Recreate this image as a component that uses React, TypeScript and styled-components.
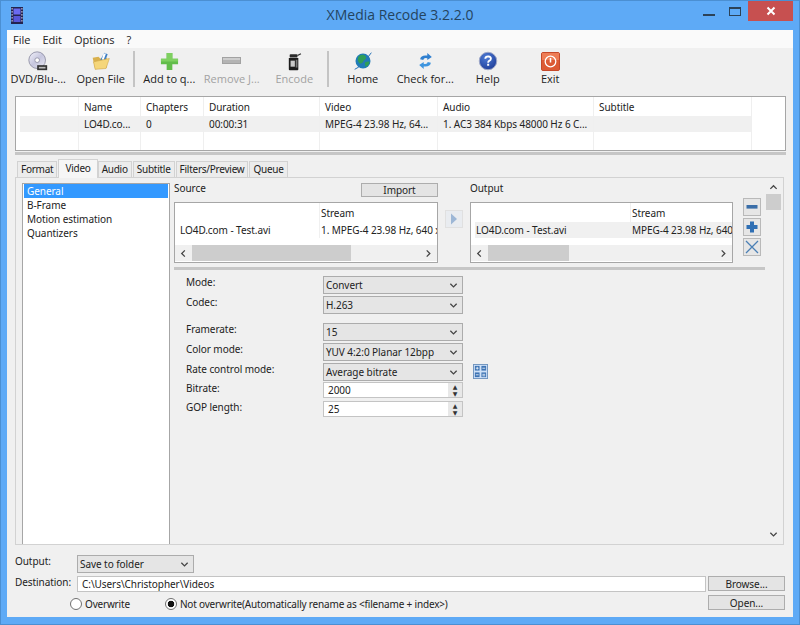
import React from 'react';
import styled, {createGlobalStyle} from 'styled-components';

const GlobalStyle = createGlobalStyle`
  html, body {
    margin: 0;
    padding: 0;
    background: #5eaaf6;
  }
  * {
    box-sizing: border-box;
  }
`;

const BODY_FONT = `"Noto Sans", "Open Sans", "Liberation Sans", sans-serif`;
const UI_FONT = `"Open Sans", "Noto Sans", "Liberation Sans", sans-serif`;

const QUEUE_COLUMNS = [63, 62, 63, 116, 118, 156, 158, 33];
const QUEUE_HEAD = ['', 'Name', 'Chapters', 'Duration', 'Video', 'Audio', 'Subtitle', ''];
const QUEUE_ROW = ['', 'LO4D.co...', '0', '00:00:31', 'MPEG-4 23.98 Hz, 64...', '1. AC3 384 Kbps 48000 Hz 6 C...', '', ''];

function Chevron({dir = 'down', size = 9}: {dir?: 'down' | 'up' | 'left' | 'right'; size?: number}) {
  const points = {
    down: '1.5,3 5,6.5 8.5,3',
    up: '1.5,6.5 5,3 8.5,6.5',
    left: '6.5,1.5 3,5 6.5,8.5',
    right: '3,1.5 6.5,5 3,8.5',
  }[dir];
  return (
    <svg width={size} height={size} viewBox="0 0 10 10">
      <polyline points={points} fill="none" stroke="#444" strokeWidth="1.4"/>
    </svg>
  );
}

function AppIcon() {
  return (
    <svg width="12" height="17" viewBox="0 0 12 17">
      <rect width="12" height="17" fill="#23234f"/>
      <rect x="2.5" y="1.5" width="7" height="6" fill="#6a6af0"/>
      <rect x="2.5" y="9" width="7" height="6" fill="#5656d8"/>
      {[1, 4, 7, 10, 13].map(y => (
        <g key={y}>
          <rect x="0.5" y={y} width="1.2" height="1.6" fill="#b9b9d8"/>
          <rect x="10.3" y={y} width="1.2" height="1.6" fill="#b9b9d8"/>
        </g>
      ))}
    </svg>
  );
}

function DiscIcon() {
  return (
    <svg width="20" height="20" viewBox="0 0 24 24">
      <defs>
        <linearGradient id="disc" x1="0" y1="0" x2="1" y2="1">
          <stop offset="0" stopColor="#f4f4fb"/>
          <stop offset="0.5" stopColor="#c6c6de"/>
          <stop offset="1" stopColor="#e8e8f2"/>
        </linearGradient>
      </defs>
      <circle cx="11" cy="11" r="10" fill="url(#disc)" stroke="#8c8ca0"/>
      <circle cx="11" cy="11" r="2.8" fill="#fff" stroke="#8c8ca0"/>
      <rect x="11" y="17" width="12" height="6" fill="#333"/>
      <rect x="13" y="19" width="8" height="2" fill="#bbb"/>
    </svg>
  );
}

function FolderIcon() {
  return (
    <svg width="20" height="20" viewBox="0 0 24 24">
      <path d="M2 8 L9 7 L11 9 L19 8 L19 20 L5 22 Z" fill="#d9b14e"/>
      <path d="M11 11 L16 2 L20 4 L17 12 Z" fill="#3f7fc4"/>
      <path d="M13 10 L15 3 L18 3 L15 11 Z" fill="#fff"/>
      <path d="M3 13 L22 9 L18 21 L5 22 Z" fill="#f5d67a" stroke="#cfa548" strokeWidth="0.7"/>
    </svg>
  );
}

function PlusIcon() {
  return (
    <svg width="19" height="19" viewBox="0 0 20 20">
      <path d="M7 1 H13 V7 H19 V13 H13 V19 H7 V13 H1 V7 H7 Z" fill="#62bd4a"/>
      <path d="M7 1 H13 V7 H7 Z M1 7 H19 V10 H1 Z" fill="#7ed060"/>
    </svg>
  );
}

function MinusIcon() {
  return (
    <svg width="20" height="8" viewBox="0 0 20 8">
      <rect x="0.5" y="0.5" width="18" height="6" fill="#b4b4b4" stroke="#a2a2a2"/>
      <rect x="1" y="1" width="17" height="2" fill="#cdcdcd"/>
    </svg>
  );
}

function EncodeIcon() {
  return (
    <svg width="16" height="19" viewBox="0 0 18 22">
      <path d="M3 7 L3 20 Q3 21 4 21 L13 21 Q14 21 14 20 L14 7 Z" fill="#1c1c1c"/>
      <rect x="4" y="2.5" width="9" height="4" rx="1" fill="#2a2a2a"/>
      <path d="M13 4 L17 2" stroke="#2a2a2a" strokeWidth="1.4"/>
      <rect x="5" y="10" width="5" height="7" fill="#c9c9c9"/>
      <rect x="11" y="9" width="2" height="9" fill="#777"/>
    </svg>
  );
}

function GlobeIcon() {
  return (
    <svg width="20" height="20" viewBox="0 0 24 24">
      <circle cx="12" cy="12" r="9" fill="#1f7cb8"/>
      <path d="M7 6 Q12 3 15 6 Q17 10 13 11 Q12 15 8 15 Q4 11 7 6 Z" fill="#2f9e58"/>
      <path d="M14 14 Q18 12 20 13 Q19 18 15 19 Z" fill="#2f9e58"/>
      <path d="M2 22 Q10 19 22 2" fill="none" stroke="#2b74b8" strokeWidth="1.2"/>
    </svg>
  );
}

function RefreshIcon() {
  return (
    <svg width="15" height="18" viewBox="0 0 16 20">
      <path d="M2 8 Q3 3 10 4 L10 1 L15 5.5 L10 9 L10 7 Q6 6 5.5 9 Z" fill="#2f7fd0"/>
      <path d="M14 12 Q13 17 6 16 L6 19 L1 14.5 L6 11 L6 13 Q10 14 10.5 11 Z" fill="#3f95de"/>
    </svg>
  );
}

function HelpIcon() {
  return (
    <svg width="20" height="20" viewBox="0 0 24 24">
      <defs>
        <radialGradient id="help" cx="0.4" cy="0.3" r="0.8">
          <stop offset="0" stopColor="#4d7bd6"/>
          <stop offset="1" stopColor="#1c3a94"/>
        </radialGradient>
      </defs>
      <circle cx="12" cy="12" r="10.5" fill="url(#help)" stroke="#9fa8c8" strokeWidth="1.2"/>
      <path d="M8.7 9.3 Q9 6.4 12.2 6.4 Q15.6 6.6 15.5 9.3 Q15.4 11 13.4 11.9 Q12.2 12.5 12.2 14" fill="none" stroke="#fff" strokeWidth="2.2"/>
      <rect x="11" y="15.3" width="2.4" height="2.4" fill="#fff"/>
    </svg>
  );
}

function ExitIcon() {
  return (
    <svg width="19" height="19" viewBox="0 0 19 19">
      <rect x="0.5" y="0.5" width="18" height="18" rx="1.5" fill="#dc5a34" stroke="#c5492a"/>
      <rect x="1" y="1" width="17" height="7" fill="#ee7d55"/>
      <circle cx="9.5" cy="9.5" r="5.3" fill="none" stroke="#fff" strokeWidth="1.3"/>
      <path d="M9.5 6 V10.5" stroke="#fff" strokeWidth="1.5"/>
    </svg>
  );
}

function CalcIcon() {
  return (
    <svg width="15" height="15" viewBox="0 0 16 16">
      <rect x="0.5" y="0.5" width="15" height="15" fill="#cfe1f7" stroke="#6f93bd"/>
      <rect x="2" y="2" width="5" height="5" fill="#3e74b4"/>
      <rect x="9" y="2" width="5" height="5" fill="#3e74b4"/>
      <rect x="2" y="9" width="5" height="5" fill="#3e74b4"/>
      <rect x="9" y="9" width="5" height="5" fill="#3e74b4"/>
      <path d="M3 4.5 H6 M4.5 3 V6 M10 4.5 H13 M3 11.5 H6 M10 11 H13 M10 12.6 H13" stroke="#fff" strokeWidth="0.8"/>
    </svg>
  );
}

function SideGlyph({kind}: {kind: 'minus' | 'plus' | 'cross'}) {
  return (
    <svg width="14" height="14" viewBox="0 0 14 14">
      {kind === 'minus' && <rect x="1.5" y="5" width="11" height="3.6" fill="#3a6ea8"/>}
      {kind === 'plus' && <path d="M5 1.5 H9 V5 H12.5 V9 H9 V12.5 H5 V9 H1.5 V5 H5 Z" fill="#2f6fb4"/>}
      {kind === 'cross' && <path d="M1 1 L13 13 M13 1 L1 13" stroke="#4a7fb5" strokeWidth="1.3"/>}
    </svg>
  );
}

function MiniList({nameWidth, name, stream, shaded, thumbWidth}: {
  nameWidth: number;
  name: string;
  stream: string;
  shaded?: boolean;
  thumbWidth: number;
}) {
  return (
    <MiniTable>
      <MiniRow $height={19}>
        <MiniCell $width={nameWidth}/>
        <MiniCell>Stream</MiniCell>
      </MiniRow>
      <MiniRow $height={16} $shaded={shaded}>
        <MiniCell $width={nameWidth}>{name}</MiniCell>
        <MiniCell>{stream}</MiniCell>
      </MiniRow>
      <MiniRow $height={7}/>
      <HScroll>
        <ScrollArrow><Chevron dir="left"/></ScrollArrow>
        <ScrollThumb style={{width: thumbWidth}}/>
        <ScrollGap/>
        <ScrollArrow><Chevron dir="right"/></ScrollArrow>
      </HScroll>
    </MiniTable>
  );
}

export default function App() {
  return (
    <Win>
      <GlobalStyle/>
      <TitleBar>
        <TitleIcon><AppIcon/></TitleIcon>
        <TitleText>XMedia Recode 3.2.2.0</TitleText>
        <WinControls>
          <MinGlyph/>
          <MaxGlyph/>
          <CloseButton>
            <svg width="10" height="10" viewBox="0 0 10 10">
              <path d="M1.5 1.5 L8.5 8.5 M8.5 1.5 L1.5 8.5" stroke="#fff" strokeWidth="2"/>
            </svg>
          </CloseButton>
        </WinControls>
      </TitleBar>
      <Client>
        <MenuBar>
          <MenuItem>File</MenuItem>
          <MenuItem>Edit</MenuItem>
          <MenuItem>Options</MenuItem>
          <MenuItem>?</MenuItem>
        </MenuBar>
        <Toolbar>
          <ToolButton><ToolIcon><DiscIcon/></ToolIcon>DVD/Blu-...</ToolButton>
          <ToolButton><ToolIcon><FolderIcon/></ToolIcon>Open File</ToolButton>
          <ToolSep/>
          <ToolButton><ToolIcon><PlusIcon/></ToolIcon>Add to q...</ToolButton>
          <ToolButton $disabled><ToolIcon><MinusIcon/></ToolIcon>Remove J...</ToolButton>
          <ToolButton $disabled><ToolIcon><EncodeIcon/></ToolIcon>Encode</ToolButton>
          <ToolSep/>
          <ToolButton><ToolIcon><GlobeIcon/></ToolIcon>Home</ToolButton>
          <ToolButton><ToolIcon><RefreshIcon/></ToolIcon>Check for...</ToolButton>
          <ToolButton><ToolIcon><HelpIcon/></ToolIcon>Help</ToolButton>
          <ToolButton><ToolIcon><ExitIcon/></ToolIcon>Exit</ToolButton>
        </Toolbar>

        <QueueTable>
          <QueueRow $height={19} $line={21}>
            {QUEUE_HEAD.map((text, i) => (
              <QueueCell key={i} style={{width: QUEUE_COLUMNS[i]}} $last={i === 7}>{text}</QueueCell>
            ))}
          </QueueRow>
          <QueueRow $height={16} $line={17}>
            {QUEUE_ROW.map((text, i) => (
              <QueueCell key={i} style={{width: QUEUE_COLUMNS[i]}} $shaded={i < 7} $first={i === 0} $last={i === 7}>
                {text}
              </QueueCell>
            ))}
          </QueueRow>
          <QueueRow $height={18} $line={17}>
            {QUEUE_COLUMNS.map((width, i) => (
              <QueueCell key={i} style={{width}} $last={i === 7}/>
            ))}
          </QueueRow>
        </QueueTable>
        <WideSplitter/>

        <Tabs>
          <Tab>Format</Tab>
          <Tab $active>Video</Tab>
          <Tab>Audio</Tab>
          <Tab>Subtitle</Tab>
          <Tab>Filters/Preview</Tab>
          <Tab>Queue</Tab>
        </Tabs>
        <Pane>
          <SideList>
            <SideItem $selected>General</SideItem>
            <SideItem>B-Frame</SideItem>
            <SideItem>Motion estimation</SideItem>
            <SideItem>Quantizers</SideItem>
          </SideList>
          <Content>
            <Streams>
              <StreamColumn $width={264}>
                <StreamHead>
                  <span>Source</span>
                  <ImportButton>Import</ImportButton>
                </StreamHead>
                <MiniList nameWidth={146} name="LO4D.com - Test.avi" stream="1. MPEG-4 23.98 Hz, 640 x 360" thumbWidth={159}/>
              </StreamColumn>
              <ArrowButton>
                <svg width="8" height="12" viewBox="0 0 8 12">
                  <path d="M1 0.5 L7 6 L1 11.5 Z" fill="#9db7d6"/>
                </svg>
              </ArrowButton>
              <StreamColumn $width={263}>
                <StreamHead><span>Output</span></StreamHead>
                <MiniList nameWidth={161} name="LO4D.com - Test.avi" stream="MPEG-4 23.98 Hz, 640 x 360" shaded thumbWidth={81}/>
              </StreamColumn>
              <SideButtons>
                <SideButton><SideGlyph kind="minus"/></SideButton>
                <SideButton><SideGlyph kind="plus"/></SideButton>
                <SideButton><SideGlyph kind="cross"/></SideButton>
              </SideButtons>
            </Streams>
            <InnerSplitter/>
            <Form>
              <FormRow>
                <FieldLabel>Mode:</FieldLabel>
                <Combo $width={140}>Convert<Chevron/></Combo>
              </FormRow>
              <FormRow $top={2}>
                <FieldLabel>Codec:</FieldLabel>
                <Combo $width={140}>H.263<Chevron/></Combo>
              </FormRow>
              <FormRow $top={9}>
                <FieldLabel>Framerate:</FieldLabel>
                <Combo $width={140}>15<Chevron/></Combo>
              </FormRow>
              <FormRow $top={2}>
                <FieldLabel>Color mode:</FieldLabel>
                <Combo $width={140}>YUV 4:2:0 Planar 12bpp<Chevron/></Combo>
              </FormRow>
              <FormRow $top={2}>
                <FieldLabel>Rate control mode:</FieldLabel>
                <Combo $width={140}>Average bitrate<Chevron/></Combo>
                <CalcSlot><CalcIcon/></CalcSlot>
              </FormRow>
              <FormRow $top={1}>
                <FieldLabel>Bitrate:</FieldLabel>
                <Spin>2000<SpinArrows>▲<br/>▼</SpinArrows></Spin>
              </FormRow>
              <FormRow $top={3}>
                <FieldLabel>GOP length:</FieldLabel>
                <Spin>25<SpinArrows>▲<br/>▼</SpinArrows></Spin>
              </FormRow>
            </Form>
          </Content>
          <VScroll>
            <Chevron dir="up"/>
            <VThumb/>
            <VGap/>
            <Chevron dir="down"/>
          </VScroll>
        </Pane>

        <Bottom>
          <BottomRow $height={20} $top={10}>
            <BottomLabel>Output:</BottomLabel>
            <Combo $width={117}>Save to folder<Chevron/></Combo>
          </BottomRow>
          <BottomRow $height={16} $top={1}>
            <BottomLabel>Destination:</BottomLabel>
            <PathField>C:\Users\Christopher\Videos</PathField>
            <PushButton>Browse...</PushButton>
          </BottomRow>
          <BottomRow $height={15} $top={3}>
            <RadioGroup>
              <RadioOption><Radio/>Overwrite</RadioOption>
              <RadioOption><Radio $checked/>Not overwrite(Automatically rename as &lt;filename + index&gt;)</RadioOption>
            </RadioGroup>
            <PushButton>Open...</PushButton>
          </BottomRow>
        </Bottom>
      </Client>
    </Win>
  );
}

const Win = styled.div`
  width: 800px;
  height: 625px;
  padding-bottom: 7px;
  display: flex;
  flex-direction: column;
  background: #5eaaf6;
  border: 1px solid #4b8fd2;
  overflow: hidden;
  color: #222;
  font-family: ${BODY_FONT};
  font-size: 10px;
  letter-spacing: -0.06px;
`;

const TitleBar = styled.div`
  height: 29px;
  flex: none;
  display: grid;
  grid-template-columns: 1fr auto 1fr;
  padding: 0 6px;
`;

const TitleIcon = styled.div`
  padding: 6px 0 0 4px;
`;

const TitleText = styled.div`
  font-family: ${UI_FONT};
  font-size: 14px;
  line-height: 28px;
  letter-spacing: 0;
  color: #24445f;
`;

const WinControls = styled.div`
  justify-self: end;
  display: flex;
  align-items: flex-start;
`;

const MinGlyph = styled.span`
  width: 12px;
  height: 2px;
  margin-top: 13px;
  background: #2c4257;
`;

const MaxGlyph = styled.span`
  width: 12px;
  height: 9px;
  margin: 6px 7px 0 14px;
  border: 1px solid #2c4257;
  border-top-width: 2px;
`;

const CloseButton = styled.span`
  width: 45px;
  height: 20px;
  display: flex;
  align-items: center;
  justify-content: center;
  background: #c75050;
`;

const Client = styled.div`
  flex: 1;
  margin: 0 6px;
  display: flex;
  flex-direction: column;
  background: #f0f0f0;
`;

const MenuBar = styled.div`
  height: 18px;
  flex: none;
  display: flex;
  padding-left: 6px;
  gap: 12px;
  background: #fafafa;
  font-family: ${UI_FONT};
  font-size: 11px;
  letter-spacing: 0;
  line-height: 19px;
`;

const MenuItem = styled.span``;

const Toolbar = styled.div`
  height: 45px;
  flex: none;
  display: flex;
  background: #f0f0f0;
`;

const ToolButton = styled.div<{$disabled?: boolean}>`
  width: 62.5px;
  display: flex;
  flex-direction: column;
  align-items: center;
  font-family: ${UI_FONT};
  font-size: 11px;
  letter-spacing: 0;
  line-height: 16px;
  white-space: nowrap;
  color: ${p => (p.$disabled ? '#a2a2a2' : '#222')};
`;

const ToolIcon = styled.div`
  height: 20px;
  margin-top: 3px;
  display: flex;
  align-items: center;
  justify-content: center;
`;

const ToolSep = styled.div`
  width: 2px;
  height: 36px;
  margin: 3px 3px 0 1px;
  background: #c4c4c4;
`;

const QueueTable = styled.div`
  height: 55px;
  flex: none;
  margin: 3px 7px 0 8px;
  border: 1px solid #a6a6a6;
  background: #fff;
`;

const QueueRow = styled.div<{$height: number; $line: number}>`
  display: flex;
  height: ${p => p.$height}px;
  line-height: ${p => p.$line}px;
`;

const QueueCell = styled.div<{$shaded?: boolean; $first?: boolean; $last?: boolean}>`
  flex: none;
  padding-left: 5px;
  white-space: nowrap;
  overflow: hidden;
  border-right: ${p => (p.$last ? 'none' : '1px solid #efefef')};
  background: ${p => (p.$shaded ? '#f0f0f0' : 'transparent')};
  margin-left: ${p => (p.$first ? '4px' : '0')};
  ${p => p.$first && 'max-width: 59px;'}
`;

const WideSplitter = styled.div`
  height: 3px;
  flex: none;
  margin: 1px 7px 0 8px;
  background: #c6c6c6;
`;

const Tabs = styled.div`
  height: 19px;
  flex: none;
  margin-top: 4px;
  padding-left: 10px;
  display: flex;
  align-items: flex-end;
  position: relative;
  z-index: 1;
  letter-spacing: -0.25px;
`;

const Tab = styled.div<{$active?: boolean}>`
  height: ${p => (p.$active ? '19px' : '17px')};
  padding: 0 ${p => (p.$active ? '6px' : '3px')};
  margin-right: ${p => (p.$active ? '0' : '1px')};
  line-height: ${p => (p.$active ? '16px' : '15px')};
  border: 1px solid #d2d2d2;
  border-bottom: ${p => (p.$active ? 'none' : '1px solid #d2d2d2')};
  background: ${p => (p.$active ? '#f6f6f6' : '#ececec')};
`;

const Pane = styled.div`
  height: 368px;
  flex: none;
  margin: -1px 9px 0 8px;
  padding: 5px 1px 0 6px;
  display: flex;
  border: 1px solid #d2d2d2;
`;

const SideList = styled.div`
  width: 148px;
  flex: none;
  padding: 0 1px;
  border: 1px solid #a6a6a6;
  border-bottom: none;
  background: #fff;
`;

const SideItem = styled.div<{$selected?: boolean}>`
  height: 14px;
  padding-left: 3px;
  line-height: 14px;
  background: ${p => (p.$selected ? '#3399ff' : 'transparent')};
  color: ${p => (p.$selected ? '#fff' : '#222')};
`;

const Content = styled.div`
  flex: 1;
  min-width: 0;
  display: flex;
  flex-direction: column;
  padding-left: 4px;
`;

const Streams = styled.div`
  display: flex;
  align-items: flex-start;
`;

const StreamColumn = styled.div<{$width: number}>`
  width: ${p => p.$width}px;
  flex: none;
`;

const StreamHead = styled.div`
  height: 19px;
  display: flex;
  justify-content: space-between;
  align-items: flex-start;
  line-height: 11px;
`;

const ImportButton = styled.div`
  width: 77px;
  height: 14px;
  text-align: center;
  line-height: 13px;
  background: #e4e4e4;
  border: 1px solid #adadad;
`;

const MiniTable = styled.div`
  height: 61px;
  border: 1px solid #a6a6a6;
  background: #fff;
  overflow: hidden;
`;

const MiniRow = styled.div<{$height: number; $shaded?: boolean}>`
  display: flex;
  height: ${p => p.$height}px;
  margin-left: 4px;
  line-height: ${p => p.$height + 1}px;
  white-space: nowrap;
  overflow: hidden;
  background: ${p => (p.$shaded ? '#f0f0f0' : 'transparent')};
`;

const MiniCell = styled.div<{$width?: number}>`
  flex: ${p => (p.$width ? 'none' : 1)};
  width: ${p => (p.$width ? `${p.$width - 5}px` : 'auto')};
  padding-left: 1px;
  overflow: hidden;
  border-right: ${p => (p.$width ? '1px solid #f0f0f0' : 'none')};
`;

const HScroll = styled.div`
  height: 16px;
  display: flex;
  align-items: stretch;
  background: #f0f0f0;
`;

const ScrollArrow = styled.div`
  width: 17px;
  flex: none;
  display: flex;
  align-items: center;
  justify-content: center;
`;

const ScrollThumb = styled.div`
  background: #cdcdcd;
`;

const ScrollGap = styled.div`
  flex: 1;
`;

const ArrowButton = styled.div`
  width: 18px;
  height: 18px;
  flex: none;
  margin: 27px 7px 0;
  display: flex;
  align-items: center;
  justify-content: center;
  background: #e9ecf0;
  border: 1px solid #e0e0e0;
`;

const SideButtons = styled.div`
  margin: 15px 0 0 10px;
  display: flex;
  flex-direction: column;
  gap: 2px;
`;

const SideButton = styled.div`
  width: 18px;
  height: 18px;
  display: flex;
  align-items: center;
  justify-content: center;
  background: #e6e6e6;
  border: 1px solid #b9b9b9;
`;

const InnerSplitter = styled.div`
  height: 3px;
  flex: none;
  margin: 4px 0 0;
  background: #c6c6c6;
`;

const Form = styled.div`
  margin-top: 6px;
  padding-left: 12px;
`;

const FormRow = styled.div<{$top?: number}>`
  display: flex;
  align-items: flex-start;
  margin-top: ${p => p.$top ?? 0}px;
`;

const FieldLabel = styled.div`
  width: 137px;
  flex: none;
  line-height: 12px;
`;

const Combo = styled.div<{$width: number}>`
  width: ${p => p.$width}px;
  height: 18px;
  flex: none;
  padding: 0 4px 0 2px;
  display: flex;
  align-items: center;
  justify-content: space-between;
  white-space: nowrap;
  background: #e5e5e5;
  border: 1px solid #acacac;
`;

const CalcSlot = styled.div`
  margin: 1px 0 0 10px;
  display: flex;
`;

const Spin = styled.div`
  width: 140px;
  height: 16px;
  flex: none;
  padding-left: 4px;
  display: flex;
  align-items: center;
  justify-content: space-between;
  background: #fff;
  border: 1px solid #c4c4c4;
`;

const SpinArrows = styled.div`
  width: 14px;
  height: 14px;
  text-align: center;
  font-family: "DejaVu Sans", sans-serif;
  font-size: 6px;
  line-height: 7px;
  color: #333;
  background: #e8e8e8;
`;

const VScroll = styled.div`
  width: 17px;
  flex: none;
  display: flex;
  flex-direction: column;
  align-items: center;
  padding: 0 0 5px;
`;

const VThumb = styled.div`
  width: 15px;
  height: 16px;
  margin-top: 2px;
  background: #cdcdcd;
`;

const VGap = styled.div`
  flex: 1;
`;

const Bottom = styled.div`
  padding: 0 8px;
  display: flex;
  flex-direction: column;
`;

const BottomRow = styled.div<{$height: number; $top: number}>`
  height: ${p => p.$height}px;
  margin-top: ${p => p.$top}px;
  display: flex;
  align-items: flex-start;
`;

const BottomLabel = styled.div`
  width: 62px;
  flex: none;
  line-height: 12px;
`;

const PathField = styled.div`
  flex: 1;
  height: 16px;
  padding-left: 4px;
  line-height: 15px;
  background: #fff;
  border: 1px solid #c4c4c4;
`;

const PushButton = styled.div`
  width: 77px;
  height: 15px;
  flex: none;
  margin-left: 2px;
  text-align: center;
  line-height: 14px;
  background: #e4e4e4;
  border: 1px solid #adadad;
`;

const RadioGroup = styled.div`
  flex: 1;
  height: 15px;
  margin-top: 1px;
  padding-left: 55px;
  display: flex;
  gap: 35px;
  letter-spacing: -0.18px;
`;

const RadioOption = styled.div`
  display: flex;
  align-items: center;
  gap: 3px;
`;

const Radio = styled.span<{$checked?: boolean}>`
  width: 12px;
  height: 12px;
  flex: none;
  border-radius: 50%;
  border: 1px solid #707070;
  background: ${p => (p.$checked ? 'radial-gradient(circle, #111 0 3px, #fff 3.6px)' : '#fff')};
`;
